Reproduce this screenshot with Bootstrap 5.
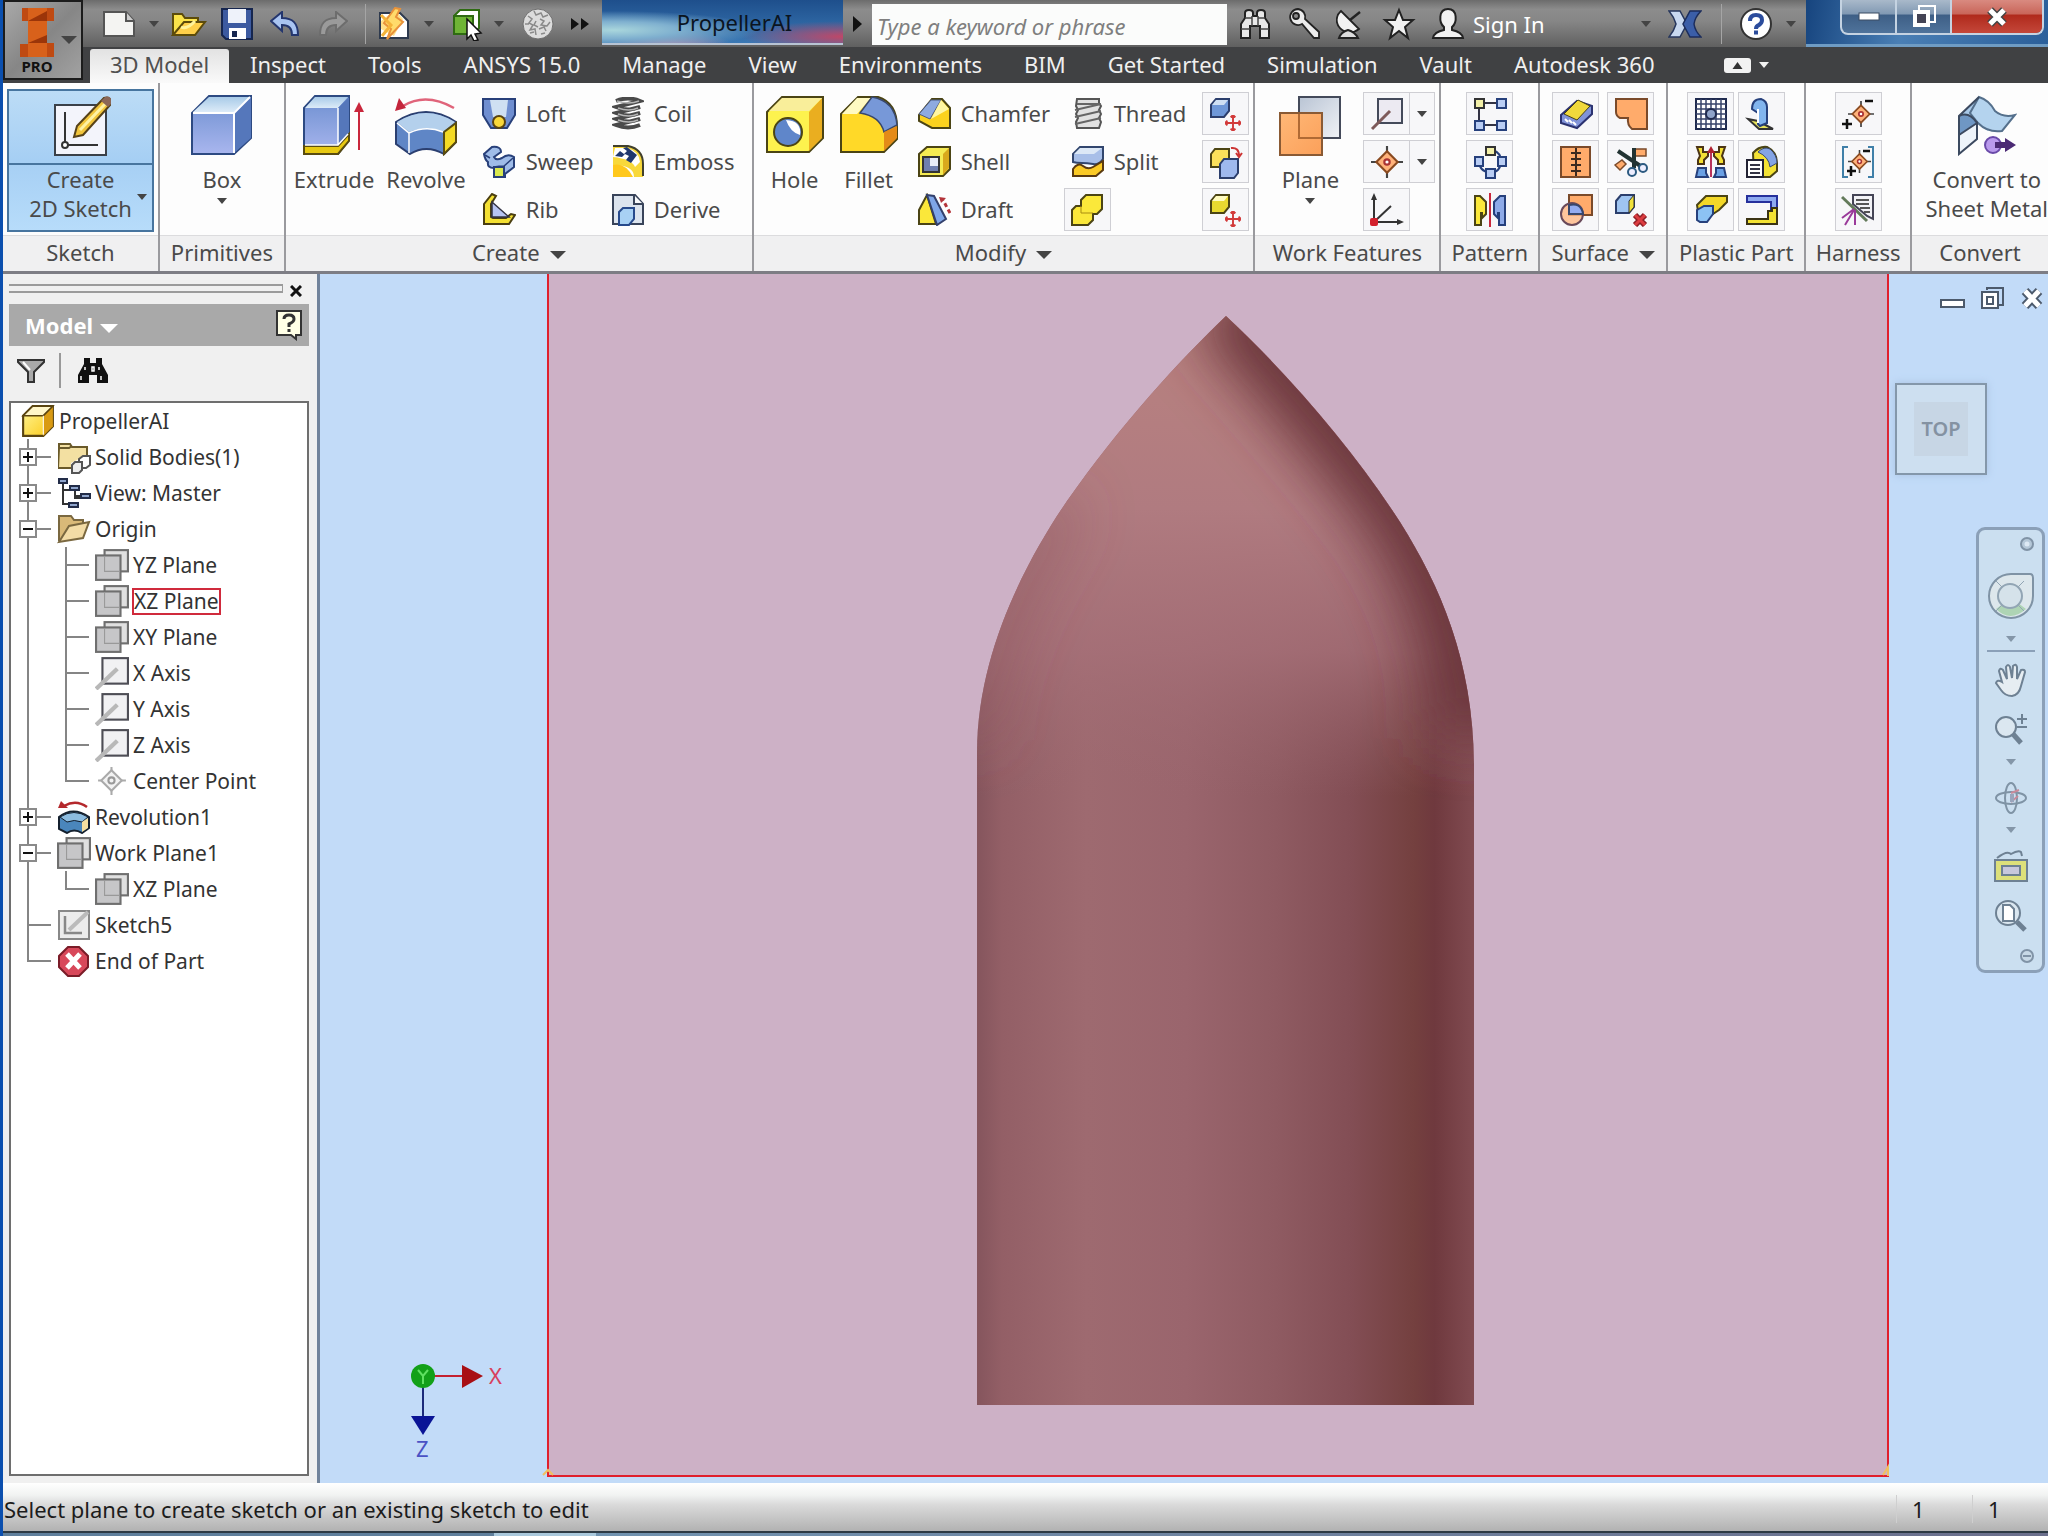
<!DOCTYPE html>
<html lang="en">
<head>
<meta charset="utf-8">
<meta name="viewport" content="width=device-width, initial-scale=1">
<title>PropellerAI</title>
<link rel="stylesheet" href="https://cdn.jsdelivr.net/npm/bootstrap@5.3.0/dist/css/bootstrap.min.css">
<style>
:root{--ui:"Noto Sans","Open Sans",sans-serif}
body{font-family:var(--ui);font-size:22px;line-height:28px;color:#4a4a4a;background:#0b4fae;min-height:100vh;overflow:hidden}
button{font:inherit;color:inherit;background:none;border:0;padding:0}
svg{display:block;flex:none}
.app-shell{min-height:100vh;padding-left:3px}
/* title bar */
.top-zone{background:#404143}
.app-btn{width:80px;height:80px;border:2px solid #1c1c1c;background:linear-gradient(135deg,#a9a9a9,#868686 50%,#a2a2a2);color:#111}
.app-btn b{font-size:15px;line-height:17px}
.title-bar{height:47px;background:linear-gradient(#6c6c6c 0,#8c8c8c 20%,#868686 45%,#606060)}
.qat-btn{width:48px;height:47px;display:flex;align-items:center;justify-content:center}
.dot-btn{width:14px;height:47px;display:flex;align-items:center;justify-content:center}
.bar-div{width:1px;height:40px;background:#a5a5a5}
.bar-div-help{margin:0 10px 0 12px}
.doc-title{width:241px;height:45px;color:#0b1420;background:radial-gradient(ellipse at 5% 70%,#a9d6dc 0,#7fb0cf 20%,transparent 45%),radial-gradient(ellipse at 100% 85%,#c04767 0,transparent 30%),radial-gradient(ellipse at 28% 110%,#c48ca8 0,transparent 26%),linear-gradient(#1e4f8c,#3a78b4);border-bottom:2px solid #b8c4d4}
.search-box{width:355px;height:41px;border:0;border-radius:0;background:#fbfcfb;font-style:italic;padding:2px 5px 0}
.search-box::placeholder{color:#7f7f7f}
.sys-zone{flex:0 0 242px;height:47px;background:linear-gradient(100deg,#16447e,#4a7fb5 40%,#2b5f9a);border-bottom:3px solid #6f9cc4}
.sys-btns{height:35px;border:2px solid #c5d3e2;border-top:0;border-radius:0 0 8px 8px;background:linear-gradient(#a9b9ca 0,#8199b3 42%,#3e5f86 46%,#4f739b);overflow:hidden}
.sys-btns button{width:55px;height:33px;display:flex;align-items:center;justify-content:center;border-right:2px solid #c5d3e2}
.sys-btns .sys-close{width:90px;border:0;background:linear-gradient(#d98a80 0,#c9665a 42%,#b02a1c 46%,#c4473a)}
/* ribbon tabs */
.rib-tabs{height:36px;padding-left:7px}
.rib-tabs .nav-link{color:#f0f0f0;padding:0 21px;line-height:30px;height:34px;border-radius:3px 3px 0 0}
.rib-tabs .nav-link.active{background:linear-gradient(#e2e2e2,#fafafa);color:#505050;width:139px;padding:0;text-align:center}
/* ribbon */
.ribbon{height:191px;background:#fdfdfd;border-bottom:3px solid #7d7d84;overflow:hidden}
.rib-panel{border-right:2px solid #9a9a9e;display:flex;flex-direction:column;min-width:0}
.rib-panel:last-child{border:0}
.rib-body{height:152px;padding-top:6px;display:flex}
.rib-name{height:36px;background:#f0f0f1;border-top:1px solid #dcdcde;text-align:center;line-height:32px;white-space:nowrap}
.rib-name button{line-height:32px}
.p-sketch{flex:155 0 0}.p-prim{flex:124 0 0}.p-create{flex:466 0 0}.p-modify{flex:500 0 0}.p-work{flex:184 0 0}.p-pattern{flex:97 0 0}.p-surface{flex:126 0 0}.p-plastic{flex:136 0 0}.p-harness{flex:104 0 0}.p-convert{flex:136 0 0}
.big-btn{display:flex;flex-direction:column;align-items:center;padding-top:5px;line-height:29px;height:144px;white-space:nowrap}
.big-btn svg{margin-bottom:9px}
.sketch-btn{width:147px;height:143px;border:2px solid #47759f;background:linear-gradient(#bcdcf6,#a6cff4 50%,#b7dcfa);padding-top:4px}
.sketch-btn .lab{border-top:2px solid #47759f;align-self:stretch;position:relative}
.sketch-btn svg{margin-bottom:6px}
.sketch-btn .car{position:absolute;right:5px;top:29px}
.row-btn{display:flex;align-items:center;height:48px;gap:10px;white-space:nowrap}
.ico-btn{width:47px;height:43px;border:1px solid #cfcfd4;background:#f7f7f9;display:flex;align-items:center;justify-content:center;margin:3px 0 2px}
.ico-drop{width:25px;border-left:0}
.stack{display:flex;flex-direction:column}
.car{display:inline-block;width:0;height:0;border:5px solid transparent;border-top:6px solid #444;border-bottom:0;vertical-align:middle}
.car-lg{border-width:8px 8px 0;margin-left:10px}
/* browser pane */
.work-zone{flex:1 1 auto;min-height:0}
.browser{width:314px;background:#f0f0f0;padding:0 8px 7px 6px;flex:none;display:flex;flex-direction:column}
.grip{height:30px;padding-top:6px}
.grip-lines{flex:1;height:9px;border:solid #9b9b9b;border-width:2px 1px 2px 0;margin-top:4px}
.grip button{width:26px;height:22px;display:flex;align-items:center;justify-content:center}
.pane-title{height:42px;background:#a9a9a9;color:#fff;font-weight:700;font-size:22px;padding:0 6px 0 16px}
.pane-title .car{border-top-color:#fff;border-width:9px 9px 0;margin-left:7px}
.pane-tools{height:55px;padding:0 8px 6px}
.pane-tools .tool-div{width:2px;height:35px;background:#999;margin:0 16px 0 14px}
.tree{flex:1;background:#fff;border:2px solid #6e6e6e;margin:0;padding:0 0 0 8px;list-style:none;font-size:21px;line-height:27px;color:#333}
.tree ul{list-style:none;margin:0;padding:0}
.trow{display:flex;align-items:center;height:36px;white-space:nowrap}
.trow svg{margin-right:4px}
.trow-root{padding-left:2px}
.gd{width:38px;height:36px;flex:none;display:flex;align-items:center;background-repeat:no-repeat;--c:linear-gradient(#858585,#858585)}
.gd-v{background-image:var(--c);background-size:2px 36px;background-position:8px 0}
.gd-t{background-image:var(--c),var(--c);background-size:2px 36px,24px 2px;background-position:8px 0,8px 17px}
.gd-l{background-image:var(--c),var(--c);background-size:2px 18px,24px 2px;background-position:8px 0,8px 17px}
.exp{width:18px;height:18px;border:2px solid #8a8a8a;background:#fff;display:flex;align-items:center;justify-content:center}
.exp svg{margin:0}
.pick{outline:2px solid #d02a3c;line-height:25px;outline-offset:-1px;padding:0 1px}
/* canvas */
.canvas{flex:1;position:relative;border-left:3px solid #71839b;background:#c2dbf8;min-width:0;overflow:hidden}
.canvas>svg{width:100%;height:100%}
.doc-ctl{position:absolute;right:3px;top:10px;gap:15px}
.cube{position:absolute;right:61px;top:109px;width:92px;height:92px;border:2px solid #8497aa;background:#cddff0;box-shadow:0 0 8px #a9c2e2;padding:17px}
.cube-in{display:flex;align-items:center;justify-content:center;width:54px;height:54px;background:#c7d6e5;color:#8492a2;font-weight:600;font-size:20px}
.nav-tools{position:absolute;right:3px;top:253px;width:69px;height:446px;border:3px solid #8ba0b8;border-radius:9px;background:#cbdff0;padding:6px 8px;color:#7f93a5;align-items:center}
.nav-tools button{display:flex;align-items:center;justify-content:center;width:48px}
.nav-tools hr{width:48px;margin:8px 0 11px;border-top:2px solid #8ba0b8;opacity:1}
.nav-tools .car{border-top-color:#8496a8}
/* status bar */
.status-bar{height:48px;background:linear-gradient(#fff 0,#f1f3f2 25%,#dadada 45%,#b2b2b2);color:#1c1c1c;padding:3px 0 0 1px}
.status-bar .cell{width:76px;border-left:1px solid #cfcfcf;padding-left:15px}
.status-bar .cell:last-child{width:88px}
.status-bar .cell:last-child{width:76px}
.task-edge{height:5px;background:linear-gradient(#2d3a44 40%,transparent 40%),linear-gradient(90deg,#5f7f9c 24%,#a9c8dc 24% 29%,#7193b0 29%,#6b6f8c)}
</style>
<script src="https://cdn.jsdelivr.net/npm/bootstrap@5.3.0/dist/js/bootstrap.bundle.min.js"></script>
</head>
<body>
<svg width="0" height="0" class="position-absolute" aria-hidden="true">
<defs>
<linearGradient id="gB" x2="0" y2="1"><stop stop-color="#6d8fd0"/><stop offset="1" stop-color="#a9b6ee"/></linearGradient>
<linearGradient id="gL" x2="0" y2="1"><stop stop-color="#a9cbe8"/><stop offset="1" stop-color="#dcebf8"/></linearGradient>
<linearGradient id="gY" x2="1" y2="1"><stop stop-color="#fff79a"/><stop offset="1" stop-color="#fbc814"/></linearGradient>
<linearGradient id="gO" x2="1" y2="1"><stop stop-color="#ffb877"/><stop offset="1" stop-color="#fba05a"/></linearGradient>
<linearGradient id="gG" x2="1" y2="1"><stop stop-color="#b9c4d4"/><stop offset="1" stop-color="#f0f2f6"/></linearGradient>
<linearGradient id="gBody" x2="1"><stop stop-color="#85555d"/><stop offset=".05" stop-color="#935f66"/><stop offset=".22" stop-color="#9e6a70"/><stop offset=".42" stop-color="#9a656d"/><stop offset=".6" stop-color="#8f5b62"/><stop offset=".75" stop-color="#834e55"/><stop offset=".88" stop-color="#74403f"/><stop offset=".92" stop-color="#6f393e"/><stop offset="1" stop-color="#814b51"/></linearGradient>
<linearGradient id="gFade" x2="0" y2="1"><stop stop-color="#b98280"/><stop offset=".4" stop-color="#b07b80"/><stop offset=".7" stop-color="#a67078" stop-opacity=".8"/><stop offset="1" stop-color="#9c686f" stop-opacity="0"/></linearGradient>
<clipPath id="hullClip"><path d="M1226 316C1180 360 1120 425 1067 501C1030 555 977 650 977 752V1405H1474V765C1473 660 1440 586 1400 522C1352 448 1290 376 1226 316Z"/></clipPath>
<filter id="soft" filterUnits="userSpaceOnUse" x="850" y="200" width="800" height="1000"><feGaussianBlur stdDeviation="28"/></filter>

<symbol id="i-plane" viewBox="0 0 32 32"><rect x="9" y="2" width="22" height="20" fill="#e0e0e0" stroke="#6f6f6f" stroke-width="2"/><rect x="1" y="7" width="23" height="23" fill="#c6c6c8" stroke="#6f6f6f" stroke-width="2"/><path d="M9 8v14h14" fill="none" stroke="#999"/></symbol>
<symbol id="i-axis" viewBox="0 0 32 32"><rect x="7" y="2" width="24" height="24" fill="#f1f1f3" stroke="#4e4e56" stroke-width="2"/><path d="M1 31 21 12" stroke="#b8b8b8" stroke-width="4"/></symbol>
<symbol id="i-move" viewBox="0 0 10 10"><path d="M5 0v10M0 5h10M3.500 1.500 5 0l1.500 1.500M3.500 8.500 5 10l1.500-1.500M1.500 3.500 0 5l1.500 1.500M8.500 3.500 10 5 8.500 6.500" fill="none" stroke="#d23a3a" stroke-width="1.200"/></symbol>
<symbol id="i-pt" viewBox="0 0 30 30"><path d="M15 0v6M15 24v6M0 15h6M24 15h6" stroke="#444" stroke-width="2"/><path d="M15 5 25 15 15 25 5 15Z" fill="#ffb27a" stroke="#8a4a20" stroke-width="2"/><circle cx="15" cy="15" r="2.500" fill="#fff" stroke="#a33" stroke-width="2"/></symbol>
<symbol id="i-bino" viewBox="0 0 32 32"><path d="M6 5q0-3 4-3t4 3v3h4V5q0-3 4-3t4 3v5l4 6v14h-9V18h-10v12H2V16l4-6Z" fill="#e8e8e8" stroke="#222" stroke-width="2"/><path d="M13 8v10M19 8v10M2 21h9M21 21h9M6 10h7M19 10h7" stroke="#444" stroke-width="1.500"/></symbol>
<symbol id="i-cube" viewBox="0 0 32 32"><path d="M2 11 11 2h19v19l-9 9H2Z" fill="url(#gY)" stroke="#5a4410" stroke-width="2"/><path d="M21 11 30 2v19l-9 9Z" fill="#d99a12"/><path d="M2 11 11 2h19l-9 9Z" fill="#fff6c8" stroke="#5a4410" stroke-width="1.500"/><path d="M21 11v18" stroke="#fff"/></symbol>
</defs>
</svg>

<div class="app-shell d-flex flex-column">
<header class="top-zone d-flex">
  <button class="app-btn d-flex align-items-center flex-shrink-0" aria-label="Application menu">
    <span class="stack align-items-center ms-2 ps-1"><svg width="40" height="52" viewBox="0 0 40 52"><path d="M5 2h32v13h-7v22h7v14H3V38h8V15H5Z" fill="#bf4a12"/><path d="M11 2h19v49H11Z" fill="#d8611b"/><path d="M11 15 30 5v10ZM11 37l19-8v8Z" fill="#9b3509"/></svg><b>PRO</b></span>
    <span class="car car-lg ms-1"></span>
  </button>
  <div class="flex-grow-1">
    <div class="title-bar d-flex">
      <div class="d-flex align-items-center ps-2">
        <button class="qat-btn ms-1" aria-label="New"><svg width="34" height="28" viewBox="0 0 34 28"><path d="M2 2h22l8 9v15H2Z" fill="#f4f4f2" stroke="#555" stroke-width="2"/><path d="M24 2v9h8" fill="#ccc" stroke="#555" stroke-width="2"/></svg></button>
        <button class="dot-btn mx-1" aria-label="New options"><span class="car"></span></button>
        <button class="qat-btn" aria-label="Open"><svg width="36" height="26" viewBox="0 0 36 26"><path d="M2 24V3h9l3 4h13v7" fill="#fbe34a" stroke="#5c4b0a" stroke-width="2"/><path d="M2 24 13 11h21L24 24Z" fill="#ffd04a" stroke="#5c4b0a" stroke-width="2"/><path d="M10 16q6 3 14-6" stroke="#fff39a" stroke-width="3" fill="none"/></svg></button>
        <button class="qat-btn" aria-label="Save"><svg width="32" height="34" viewBox="0 0 32 34"><path d="M1 2h30v30H5L1 28Z" fill="#3c5aa0" stroke="#16264f" stroke-width="2"/><rect x="7" y="2" width="18" height="14" fill="#eef2fa"/><rect x="8" y="21" width="17" height="11" fill="#fff"/><rect x="11" y="24" width="5" height="6" fill="#16264f"/></svg></button>
        <button class="qat-btn" aria-label="Undo"><svg width="30" height="26" viewBox="0 0 30 26"><path d="M1 10 12 1v6c11 0 16 5 16 17h-6c0-7-3-10-10-10v6Z" fill="#a9c4f2" stroke="#24366e" stroke-width="2"/></svg></button>
        <button class="qat-btn" aria-label="Redo"><svg width="30" height="26" viewBox="0 0 30 26"><path d="M29 10 18 1v6C7 7 2 12 2 24h6c0-7 3-10 10-10v6Z" fill="#9a9a9a" stroke="#6d6d6d" stroke-width="2"/></svg></button>
        <span class="bar-div ms-2"></span>
        <button class="qat-btn ms-1" aria-label="Home view"><svg width="34" height="34" viewBox="0 0 34 34"><path d="M3 6h20l8 8v17H3Z" fill="#fff" stroke="#2e3a4e" stroke-width="2"/><path d="M4 14 18 3l8 9-9 17L4 22Z" fill="#ffe08a"/><path d="M18 1 7 16l7 6-4 10 16-17-7-5 4-8Z" fill="#ffdb6b" stroke="#e8923a" stroke-width="2"/><path d="M4 8 14 18 5 29" fill="none" stroke="#f4b33a" stroke-width="3"/></svg></button>
        <button class="dot-btn ms-1" aria-label="Home options"><span class="car"></span></button>
        <button class="qat-btn ms-2" aria-label="Select"><svg width="34" height="34" viewBox="0 0 34 34"><path d="M3 9 9 3h19v18l-6 6H3Z" fill="#fff" stroke="#2f6b12" stroke-width="2"/><path d="M3 9h19v18H3Z" fill="#6fb536" stroke="#2f6b12" stroke-width="2"/><path d="m16 12 14 14-6 1 3 6-4 1-3-6-4 4Z" fill="#fff" stroke="#111" stroke-width="1.500"/></svg></button>
        <button class="dot-btn" aria-label="Select options"><span class="car"></span></button>
        <button class="qat-btn ms-2" aria-label="Appearance"><svg width="34" height="34" viewBox="0 0 34 34"><circle cx="17" cy="17" r="15" fill="#dcdcdc" stroke="#6f6f6f"/><path d="M7 9l4 3-3 4 4 2-3 5 5-1 1 6M13 4l2 4 5-2 2 4 5-2M19 12l4 2-3 4 6 1 3-4M18 22l5-2 2 4M15 14l-2 4 4 2M9 26l4-1M4 17h4M20 27l4-1" stroke="#8a8a8a" stroke-width="1.500" fill="none"/></svg></button>
        <button class="d-flex px-2 me-1" aria-label="More tools"><svg width="20" height="14" viewBox="0 0 20 14"><path d="m1 1 8 6-8 6ZM11 1l8 6-8 6Z" fill="#111"/></svg></button>
      </div>
      <div class="doc-title d-flex align-items-center justify-content-center ps-4">PropellerAI</div>
      <button class="d-flex align-items-center px-2" aria-label="Expand title"><svg width="13" height="18" viewBox="0 0 13 18"><path d="m2 1 9 8-9 8Z" fill="#111"/></svg></button>
      <input class="search-box mt-1" type="search" aria-label="Search" placeholder="Type a keyword or phrase">
      <div class="d-flex align-items-center text-white text-nowrap">
        <button class="qat-btn ms-1" aria-label="Find"><svg width="32" height="34"><use href="#i-bino"/></svg></button>
        <button class="qat-btn" aria-label="Licences"><svg width="34" height="34" viewBox="0 0 34 34"><path d="M12 2a8 8 0 1 0 4 15l12 14h5v-6L19 12A8 8 0 0 0 12 2Zm-2 4a3 3 0 1 1 0 6 3 3 0 0 1 0-6Z" fill="#ececec" stroke="#222" stroke-width="1.800"/></svg></button>
        <button class="qat-btn" aria-label="Subscription center"><svg width="30" height="32" viewBox="0 0 30 32"><path d="M5 3a13 12 0 0 0 18 18Z" fill="#f2f2f2" stroke="#222" stroke-width="1.800"/><path d="m14 12 10-8" stroke="#222" stroke-width="2.500"/><path d="M3 30q2-6 9-8 7 2 10 8Z" fill="#ddd" stroke="#222" stroke-width="2"/></svg></button>
        <button class="qat-btn" aria-label="Favorites"><svg width="34" height="34" viewBox="0 0 34 34"><path d="m17 3 4 10h10l-8 7 3 11-9-7-9 7 3-11-8-7h10Z" fill="#f2f2f2" stroke="#222" stroke-width="2"/></svg></button>
        <button class="d-flex align-items-center ms-2 gap-2"><svg width="34" height="34" viewBox="0 0 34 34"><path d="M17 2c10 0 9 14 4 18v3q10 2 11 8H2q1-6 11-8v-3C8 16 7 2 17 2Z" fill="#f2f2f2" stroke="#222" stroke-width="2"/></svg>Sign In</button>
      </div>
      <div class="d-flex align-items-center ms-auto">
        <button class="dot-btn" aria-label="Account options"><span class="car"></span></button>
        <button class="qat-btn ms-2" aria-label="Exchange apps"><svg width="34" height="30" viewBox="0 0 34 30"><path d="M1 2h11l7 13-7 13H1q5-6 7-13-2-7-7-13Z" fill="#c8d8ef" stroke="#26365c" stroke-width="1.500"/><path d="M33 2H22l-7 13 7 13h11q-6-6-7-13 1-7 7-13Z" fill="#3b5ea8" stroke="#1c2d5c" stroke-width="1.500"/></svg></button>
        <span class="bar-div bar-div-help"></span>
        <button class="qat-btn" aria-label="Help"><svg width="34" height="34" viewBox="0 0 34 34"><circle cx="17" cy="17" r="15" fill="#fff" stroke="#333" stroke-width="2"/><path d="M11 14q0-6 6-6t6 5q0 3-3 5-3 1-3 4" fill="none" stroke="#2b4c9c" stroke-width="4"/><rect x="15" y="23.500" width="4" height="4" fill="#2b4c9c"/></svg></button>
        <button class="dot-btn ms-1 me-2" aria-label="Help options"><span class="car"></span></button>
      </div>
      <div class="sys-zone d-flex justify-content-end pe-1">
        <div class="sys-btns d-flex align-self-start">
          <button aria-label="Minimize"><svg width="22" height="9"><rect x="1" y="1" width="20" height="7" fill="#fff" stroke="#3c4d63"/></svg></button>
          <button aria-label="Restore"><svg width="24" height="24" viewBox="0 0 24 24"><path d="M7 5V1h16v16h-5" fill="none" stroke="#fff" stroke-width="2"/><rect x="3" y="7" width="13" height="13" fill="#445" stroke="#fff" stroke-width="4"/></svg></button>
          <button class="sys-close" aria-label="Close"><svg width="22" height="20" viewBox="0 0 22 20"><path d="m4 3 14 14M18 3 4 17" stroke="#444" stroke-width="8"/><path d="m4 3 14 14M18 3 4 17" stroke="#fff" stroke-width="5"/></svg></button>
        </div>
      </div>
    </div>
    <nav class="nav rib-tabs flex-nowrap align-items-end text-nowrap" aria-label="Ribbon">
      <a class="nav-link active" href="#">3D Model</a><a class="nav-link" href="#">Inspect</a><a class="nav-link" href="#">Tools</a><a class="nav-link" href="#">ANSYS 15.0</a><a class="nav-link" href="#">Manage</a><a class="nav-link" href="#">View</a><a class="nav-link" href="#">Environments</a><a class="nav-link" href="#">BIM</a><a class="nav-link" href="#">Get Started</a><a class="nav-link" href="#">Simulation</a><a class="nav-link" href="#">Vault</a><a class="nav-link" href="#">Autodesk 360</a>
      <button class="align-self-center d-flex align-items-center ms-5 gap-2" aria-label="Minimize ribbon"><svg width="27" height="15" viewBox="0 0 27 15"><rect width="27" height="15" rx="3" fill="#f2f2f2"/><path d="m13.500 4 5 7h-10Z" fill="#333"/></svg><span class="car border-bottom-0" style="border-top-color:#f2f2f2"></span></button>
    </nav>
  </div>
</header>

<section class="ribbon d-flex" aria-label="3D Model ribbon">
  <div class="rib-panel p-sketch"><div class="rib-body ps-1">
    <button class="big-btn sketch-btn"><svg width="60" height="62" viewBox="0 0 60 62"><rect x="4" y="10" width="51" height="50" fill="#f3f4fb" stroke="#3a4048" stroke-width="2"/><path d="M14 17v33h33" fill="none" stroke="#333" stroke-width="2"/><circle cx="14" cy="50" r="3" fill="#fff" stroke="#333" stroke-width="2"/><path d="m23 42 3-11L53 3q7-2 7 6L32 40Z" fill="#f2c53c" stroke="#574218" stroke-width="2"/><path d="m29 35 27-28" stroke="#fff2a4" stroke-width="3"/><path d="m50 6 4-4q7-2 7 6l-4 4Z" fill="#8b6757"/></svg><span class="lab">Create<br>2D Sketch<i class="car"></i></span></button>
  </div><div class="rib-name">Sketch</div></div>

  <div class="rib-panel p-prim"><div class="rib-body justify-content-center">
    <button class="big-btn"><svg width="62" height="62" viewBox="0 0 62 62"><path d="M1 19 18 2h42v42L43 60H1Z" fill="url(#gB)" stroke="#2d4a82" stroke-width="2"/><path d="M2 18 18 3h41L43 18Z" fill="url(#gL)"/><path d="M43 19 60 3v41L43 59Z" fill="#5577bb"/><path d="M2 19h41v40M43 19 59 3" fill="none" stroke="#fff" stroke-width="2"/></svg>Box<i class="car mt-1"></i></button>
  </div><div class="rib-name">Primitives</div></div>

  <div class="rib-panel p-create"><div class="rib-body ps-2">
    <button class="big-btn me-2 pe-1"><svg width="62" height="62" viewBox="0 0 62 62"><path d="M1 14 12 2h34v44L35 60H1Z" fill="url(#gB)" stroke="#2d4a82" stroke-width="2"/><path d="M2 14 12 3h33L35 14Z" fill="url(#gL)"/><path d="M35 14 46 3v40L35 54Z" fill="#5577bb"/><path d="M1 52h34l11-12v7L35 60H1Z" fill="#e8c912" stroke="#5a4c10" stroke-width="2"/><path d="M2 51h33l10-11M35 14v37" fill="none" stroke="#fff" stroke-width="1.500"/><path d="M56 56V14" stroke="#c9273c" stroke-width="2"/><path d="m56 8 5 10H51Z" fill="#c9273c"/></svg>Extrude</button>
    <button class="big-btn me-3"><svg width="64" height="62" viewBox="0 0 64 62"><path d="M2 28Q32 8 62 28v20L50 60q-18-10-34 0L2 50Z" fill="#5f86c6" stroke="#2b3f70" stroke-width="2"/><path d="M3 28Q32 10 61 28L49 38q-18-7-34 0Z" fill="#b4d0ec"/><path d="M50 38 62 29v19L50 60Z" fill="#f4da24" stroke="#5a4c10" stroke-width="2"/><path d="M15 39v20M3 29l12 10q17-8 34-1" fill="none" stroke="#fff" stroke-width="1.500"/><path d="M9 12Q32-2 60 14" fill="none" stroke="#e0647a" stroke-width="2.500"/><path d="m1 17 4-13 7 10Z" fill="#c4263c"/></svg>Revolve</button>
    <div class="stack" style="width:130px">
      <button class="row-btn"><svg width="34" height="33" viewBox="0 0 34 33"><path d="M1 2h32v16l-8 13H9L1 18Z" fill="#6f8ed0" stroke="#28407a" stroke-width="2"/><path d="M8 3h18l-2 17H11Z" fill="#cfe0f2"/><circle cx="17" cy="25" r="6" fill="#f9d83a" stroke="#5a4410" stroke-width="2"/></svg>Loft</button>
      <button class="row-btn"><svg width="34" height="33" viewBox="0 0 34 33"><path d="m2 9 8-7q9-1 9 5l-7 5q2 4 8 1 6-5 12-1v10l-9 7v3H12v-9q-7 0-6-6-3-2-4-8Z" fill="#9fbce8" stroke="#28407a" stroke-width="2"/><path d="m3 10 5 3M12 22q5-1 10-1l9-8" fill="none" stroke="#28407a" stroke-width="1.500"/><rect x="12" y="22" width="10" height="10" fill="#d9e94e" stroke="#28407a" stroke-width="2"/></svg>Sweep</button>
      <button class="row-btn"><svg width="34" height="33" viewBox="0 0 34 33"><path d="M2 31V11l8-10 4 2-5 8v13l2 1h13l5-4 4 1-6 9Z" fill="#f4e032" stroke="#4a3e10" stroke-width="2"/><path d="m10 9 17 15H10Z" fill="#b7c4f2" stroke="#334" stroke-width="1.500"/></svg>Rib</button>
    </div>
    <div class="stack">
      <button class="row-btn"><svg width="32" height="33" viewBox="0 0 32 33"><path d="M4 4q12-5 24 0L4 10q12 5 24 0L4 16q12 5 24 0L4 22q12 5 24 0L4 28q12 5 24 0" fill="none" stroke="#4a4a4a" stroke-width="4"/><path d="M5 4q12 4 22 0M6 11q11 4 20 0M6 17q11 4 20 0M6 23q11 4 20 0" stroke="#b5b5b5" stroke-width="1.500" fill="none"/></svg>Coil</button>
      <button class="row-btn"><svg width="32" height="33" viewBox="0 0 32 33"><path d="M1 2h16q14 3 14 17v13h-9q0-12-21-12Z" fill="#f8d83a" stroke="none"/><path d="M1 1h15q15 3 15 18v12" fill="none" stroke="#41402c" stroke-width="2"/><path d="M3 3h12q12 3 13 14l-5 5Q20 14 1 12Z" fill="#fff"/><path d="m3 11 5-5 4 3 3-3-4-3 4-1 10 8-6 8-5-3 3-4-4-2-3 3Z" fill="#20386e"/><path d="M1 20q12-3 20 12H1Z" fill="#ffc81c"/></svg>Emboss</button>
      <button class="row-btn"><svg width="32" height="33" viewBox="0 0 32 33"><path d="M1 31V2h22l8 9v20Z" fill="#dce4ee" stroke="#39445a" stroke-width="2"/><path d="M22 2v9h9" fill="#f8fafc" stroke="#39445a" stroke-width="2"/><path d="m7 19 4-4h11v11l-5 6H7Z" fill="#a8d1f4" stroke="#274a8c" stroke-width="2"/></svg>Derive</button>
    </div>
  </div><div class="rib-name"><button>Create<i class="car car-lg"></i></button></div></div>

  <div class="rib-panel p-modify"><div class="rib-body ps-1">
    <div class="d-flex gap-2">
    <button class="big-btn ms-1" style="width:66px"><svg width="58" height="62" viewBox="0 0 58 62"><path d="M1 18 16 3h41v41L43 58H1Z" fill="#fdf24e" stroke="#4b4414" stroke-width="2"/><path d="M43 18 56 4v40L43 57Z" fill="#eaae20"/><path d="M3 17 16 4h40L43 17Z" fill="#f9ee9a"/><circle cx="22" cy="38" r="14" fill="#5f86ca" stroke="#4b4414" stroke-width="2"/><path d="M20 26q4 12 14 15 2-14-14-15Z" fill="#fff"/></svg>Hole</button>
    <button class="big-btn" style="width:66px"><svg width="58" height="62" viewBox="0 0 58 62"><path d="M1 20 18 3h20q19 6 19 30v12L44 58H1Z" fill="#ffd928" stroke="#4b4414" stroke-width="2"/><path d="M2 20 17 4h14L17 20Z" fill="#fffac2"/><path d="M32 3q23 4 25 28L44 38Q40 22 20 19Z" fill="#7798d8" stroke="#38476c" stroke-width="1.500"/><path d="M44 38 57 32v12L44 57Z" fill="#e48b18"/></svg>Fillet</button>
    </div>
    <div class="stack ms-3" style="width:154px">
      <button class="row-btn"><svg width="33" height="33" viewBox="0 0 33 33"><path d="M1 18 14 2h10l8 9v20H14L1 24Z" fill="#fbd21e" stroke="#4b4414" stroke-width="2"/><path d="M1 17 13 3h10L12 22Z" fill="#8eaae0" stroke="#4b5a80"/><path d="M13 22 23 3l8 9Z" fill="#fff6a2"/></svg>Chamfer</button>
      <button class="row-btn"><svg width="33" height="33" viewBox="0 0 33 33"><path d="M1 9 9 2h23v22l-7 7H1Z" fill="#f5eb52" stroke="#4b4414" stroke-width="2"/><path d="M25 9 31 3v20l-6 7Z" fill="#d9a91c"/><rect x="5" y="12" width="16" height="15" fill="#6f7fae" stroke="#333" stroke-width="2"/><path d="M12 13v8h8v-8Z" fill="#e8ecf6"/></svg>Shell</button>
      <button class="row-btn"><svg width="33" height="33" viewBox="0 0 33 33"><path d="M1 31V17L9 2l9 29Z" fill="#fbe73a" stroke="#4b4414" stroke-width="2"/><path d="m9 2 7 1 12 23-9 6Z" fill="#7fa6e8" stroke="#33406c" stroke-width="2"/><path d="m32 20-7-13" stroke="#b3343a" stroke-width="3" stroke-dasharray="4 3"/><path d="m21 4 7 1-5 5Z" fill="#b3343a"/></svg>Draft</button>
    </div>
    <div class="stack" style="width:128px">
      <button class="row-btn"><svg width="32" height="33" viewBox="0 0 32 33"><path d="M5 2h22v4l2 3-2 4 2 4-2 4 2 4-2 6H5l-1-6 2-4-2-4 2-4-2-4Z" fill="#e1e1e1" stroke="#555" stroke-width="2"/><path d="M3 13 29 7M3 20l26-6M3 27l26-6M5 7h22" stroke="#666" stroke-width="2"/></svg>Thread</button>
      <button class="row-btn"><svg width="32" height="33" viewBox="0 0 32 33"><path d="M1 9 8 2h23v12q-4 6-10 5t-11-1q-6 0-9-1Z" fill="#a8bfe8" stroke="#32466e" stroke-width="2"/><path d="M2 9 8 3h22l-8 6Z" fill="#dce8f6"/><path d="M1 24q5-7 10-3t10 1l10-6v9l-7 6H1Z" fill="#fbca26" stroke="#5a3a10" stroke-width="2"/></svg>Split</button>
      <button class="ico-btn" aria-label="Combine" style="margin-left:-8px"><svg width="34" height="34" viewBox="0 0 34 34"><path d="M2 17 6 13h5V7l5-5h16v14l-5 5h-4v6l-5 5H2Z" fill="#fbe83a" stroke="#4b4414" stroke-width="2"/><path d="M11 13v7h12" fill="none" stroke="#a98c10"/></svg></button>
    </div>
    <div class="stack ms-auto me-1">
      <button class="ico-btn" aria-label="Move face"><svg width="34" height="34" viewBox="0 0 34 34"><path d="m2 8 5-6h13v12l-5 6H2Z" fill="#6f98d8" stroke="#2b3e6c" stroke-width="2"/><path d="m3 8 4-5h12l-4 5Z" fill="#cfe0f4"/><use href="#i-move" x="16" y="18" width="16" height="16"/></svg></button>
      <button class="ico-btn" aria-label="Copy object"><svg width="34" height="34" viewBox="0 0 34 34"><path d="m2 9 4-5h14v14l-5 4H2Z" fill="#fbe05a" stroke="#4b4414" stroke-width="2"/><path d="m11 19 4-5h14v14l-4 5H11Z" fill="#9fb9ee" stroke="#2b3e6c" stroke-width="2"/><path d="M22 3q8-1 8 8m-3-3 3 4 3-4" fill="none" stroke="#c33" stroke-width="2"/></svg></button>
      <button class="ico-btn" aria-label="Move bodies"><svg width="34" height="34" viewBox="0 0 34 34"><path d="m2 8 5-6h13v12l-5 6H2Z" fill="#e9d930" stroke="#4b4414" stroke-width="2"/><path d="m3 8 4-5h12l-4 5Z" fill="#fffbc0"/><use href="#i-move" x="16" y="18" width="16" height="16"/></svg></button>
    </div>
  </div><div class="rib-name"><button>Modify<i class="car car-lg"></i></button></div></div>

  <div class="rib-panel p-work"><div class="rib-body justify-content-between ps-4 pe-1">
    <button class="big-btn"><svg width="62" height="62" viewBox="0 0 62 62"><rect x="20" y="3" width="41" height="41" fill="url(#gG)" stroke="#444a5a" stroke-width="2"/><rect x="1" y="19" width="42" height="42" fill="url(#gO)" stroke="#8a5a34" stroke-width="2"/><path d="M20 20v24h22" fill="none" stroke="#b06a34" stroke-width="2"/></svg>Plane<i class="car mt-1"></i></button>
    <div class="stack">
      <div class="d-flex"><button class="ico-btn" aria-label="Axis"><svg width="34" height="34" viewBox="0 0 34 34"><rect x="8" y="2" width="24" height="24" fill="#eceaf2" stroke="#444a5a" stroke-width="2"/><path d="m2 32 18-18" stroke="#7d5a5a" stroke-width="3"/></svg></button><button class="ico-btn ico-drop" aria-label="Axis options"><i class="car"></i></button></div>
      <div class="d-flex"><button class="ico-btn" aria-label="Point"><svg width="32" height="32"><use href="#i-pt"/></svg></button><button class="ico-btn ico-drop" aria-label="Point options"><i class="car"></i></button></div>
      <button class="ico-btn" aria-label="UCS"><svg width="34" height="34" viewBox="0 0 34 34"><path d="M4 29V4M4 29h26M5 28 21 13" stroke="#333" stroke-width="2"/><path d="m4 0 3 7H1ZM34 29l-7 3v-6Z" fill="#333"/><rect y="25" width="8" height="8" rx="2" fill="#d3202c"/></svg></button>
    </div>
  </div><div class="rib-name">Work Features</div></div>

  <div class="rib-panel p-pattern"><div class="rib-body justify-content-center"><div class="stack">
      <button class="ico-btn" aria-label="Rectangular"><svg width="34" height="34" viewBox="0 0 34 34"><path d="M6 6h22M6 6v22h22" fill="none" stroke="#334" stroke-width="2"/><g fill="#b9cdf4" stroke="#26407c" stroke-width="2"><rect x="24" y="2" width="9" height="9"/><rect x="2" y="24" width="9" height="9"/><rect x="24" y="24" width="9" height="9"/><rect x="2" y="2" width="9" height="9" fill="#f3f0a8" stroke="#333"/></g></svg></button>
      <button class="ico-btn" aria-label="Circular"><svg width="34" height="34" viewBox="0 0 34 34"><path d="M20 5q8 3 8 11 0 11-11 12-11-2-11-12" fill="none" stroke="#26407c" stroke-width="2"/><g fill="#b9cdf4" stroke="#26407c" stroke-width="2"><rect x="2" y="12" width="8" height="9"/><rect x="25" y="12" width="8" height="9"/><rect x="13" y="24" width="9" height="9"/><rect x="13" y="2" width="9" height="8" fill="#f3f0a8" stroke="#333"/></g></svg></button>
      <button class="ico-btn" aria-label="Mirror"><svg width="34" height="34" viewBox="0 0 34 34"><path d="M2 3h5l6 6v12l-4 4v-5H8v12H2Z" fill="#fbe83a" stroke="#4b4414" stroke-width="2"/><path d="M32 3h-5l-6 6v12l4 4v-5h1v12h6Z" fill="#8eaae8" stroke="#26407c" stroke-width="2"/><path d="M17 0v34" stroke="#c9273c" stroke-width="2"/></svg></button>
  </div></div><div class="rib-name">Pattern</div></div>

  <div class="rib-panel p-surface"><div class="rib-body justify-content-center gap-2"><div class="stack">
      <button class="ico-btn" aria-label="Thicken"><svg width="34" height="34" viewBox="0 0 34 34"><path d="m2 18 16-14 15 5v8L18 31 2 26Z" fill="#8193d8" stroke="#2b3270" stroke-width="2"/><path d="m5 17 14-14 12 6-13 14Z" fill="#f1d93c" stroke="#4b4414"/><path d="m6 22 3 3m1-2 3 3m1-1 3 3" stroke="#fff" stroke-width="2"/></svg></button>
      <button class="ico-btn" aria-label="Stitch"><svg width="34" height="34" viewBox="0 0 34 34"><rect x="2" y="2" width="29" height="30" fill="#ffab6b" stroke="#7a4a2a" stroke-width="2"/><path d="M17 3v28M12 8h10M12 14h10M12 20h10M12 26h10" stroke="#3c2a20" stroke-width="2"/></svg></button>
      <button class="ico-btn" aria-label="Sculpt"><svg width="34" height="34" viewBox="0 0 34 34"><rect x="10" y="2" width="23" height="20" fill="#ffab6b" stroke="#7a4a2a" stroke-width="2"/><circle cx="13" cy="21" r="11" fill="#ffb884" fill-opacity=".8" stroke="#6a4a5a" stroke-width="2"/><path d="M10 12q12-3 14 9H10Z" fill="#94acf0" stroke="#38476c" stroke-width="2"/></svg></button>
    </div><div class="stack">
      <button class="ico-btn" aria-label="Patch"><svg width="34" height="34" viewBox="0 0 34 34"><path d="M2 2h31v30H18q-5-4-4-11H6q-4-2-4-6Z" fill="#ffab6b" stroke="#7a4a2a" stroke-width="2"/></svg></button>
      <button class="ico-btn" aria-label="Trim"><svg width="34" height="34" viewBox="0 0 34 34"><path d="M20 4h12v7H20ZM1 20l7-5 4 4-6 6Z" fill="#ffab6b" stroke="#7a4a2a" stroke-width="1.500"/><path d="m4 6 24 16M20 3v20" stroke="#233" stroke-width="4"/><circle cx="18" cy="27" r="4" fill="#eef" stroke="#2c5a80" stroke-width="2"/><circle cx="29" cy="23" r="4" fill="#eef" stroke="#2c5a80" stroke-width="2"/></svg></button>
      <button class="ico-btn" aria-label="Delete face"><svg width="34" height="34" viewBox="0 0 34 34"><path d="m2 8 5-6h13v12l-5 6H2Z" fill="#9fc4f0" stroke="#2b3e6c" stroke-width="2"/><path d="m15 8 5-6v12l-5 6Z" fill="#f1e23c" stroke="#333"/><path d="m21 22 10 10M31 22 21 32" stroke="#8c1f26" stroke-width="6"/><path d="m21 22 10 10M31 22 21 32" stroke="#dc3c40" stroke-width="3"/></svg></button>
  </div></div><div class="rib-name"><button>Surface<i class="car car-lg"></i></button></div></div>

  <div class="rib-panel p-plastic"><div class="rib-body justify-content-center gap-1"><div class="stack">
      <button class="ico-btn" aria-label="Grill"><svg width="34" height="34" viewBox="0 0 34 34"><rect x="2" y="2" width="30" height="30" fill="#fff" stroke="#1f2a4e" stroke-width="2"/><path d="M7 2v30M12 2v30M17 2v30M22 2v30M27 2v30M2 7h30M2 12h30M2 17h30M2 22h30M2 27h30" stroke="#37436a" stroke-width="1.500"/><circle cx="17" cy="17" r="5" fill="#8fa3c8" stroke="#1f2a4e" stroke-width="2"/></svg></button>
      <button class="ico-btn" aria-label="Boss"><svg width="34" height="34" viewBox="0 0 34 34"><path d="M3 2h6v5h5v4l-4 4v4H4v-4l2-4ZM31 2h-6v5h-5v4l4 4v4h6v-4l-2-4Z" fill="#f3de34" stroke="#4b3414" stroke-width="2"/><path d="M4 23h8v5l2 4H2ZM30 23h-8v5l-2 4h12Z" fill="#6aa0e4" stroke="#26407c" stroke-width="2"/><path d="M17 32V6" stroke="#b8335c" stroke-width="2"/><path d="m17 1 4 7h-8Z" fill="#b02030"/></svg></button>
      <button class="ico-btn" aria-label="Lip"><svg width="34" height="34" viewBox="0 0 34 34"><path d="m3 12 9-9h21v6l-8 8-6 4v-8h-8v5H4Z" fill="#f3d828" stroke="#4b4414" stroke-width="2"/><path d="m3 17 7-4h9v8l-6 8H6l-3-2Z" fill="#8cc2f4" stroke="#26407c" stroke-width="2"/></svg></button>
    </div><div class="stack">
      <button class="ico-btn" aria-label="Rest"><svg width="34" height="34" viewBox="0 0 34 34"><path d="m3 22 10 2 15 8H14Z" fill="#e8e45c" stroke="#333" stroke-width="2"/><path d="M7 12q0-10 9-10 6 2 6 8v16l-7 3-2-2V16Z" fill="#82b5ee" stroke="#26407c" stroke-width="2"/><path d="M13 12v14" stroke="#fff" stroke-width="2"/></svg></button>
      <button class="ico-btn" aria-label="Rule fillet"><svg width="34" height="34" viewBox="0 0 34 34"><path d="M8 8q6-7 14-6 10 5 10 16v8l-7 6H9Z" fill="#f3e234" stroke="#4b4414" stroke-width="2"/><path d="M13 7q6-6 12-3 7 6 7 14l-7 4q-1-10-12-15Z" fill="#84a4e4" stroke="#38476c"/><rect x="2" y="15" width="16" height="17" fill="#fff" stroke="#223" stroke-width="2"/><path d="M5 20h10M5 24h10M5 28h10" stroke="#334" stroke-width="2"/></svg></button>
      <button class="ico-btn" aria-label="Snap fit"><svg width="34" height="34" viewBox="0 0 34 34"><path d="M2 3h30v13h-6V9H2Z" fill="#8eaaf0" stroke="#26309c" stroke-width="2"/><path d="M2 31v-5h21v-8h4v-3h5v16Z" fill="#f3e234" stroke="#3b3414" stroke-width="2"/></svg></button>
  </div></div><div class="rib-name">Plastic Part</div></div>

  <div class="rib-panel p-harness"><div class="rib-body justify-content-center"><div class="stack">
      <button class="ico-btn" aria-label="Place harness point"><svg width="34" height="34" viewBox="0 0 34 34"><use href="#i-pt" x="7" y="4" width="26" height="26"/><path d="M24 4h8M1 27h10M6 22v10" stroke="#111" stroke-width="2.500"/></svg></button>
      <button class="ico-btn" aria-label="Place pin group"><svg width="34" height="34" viewBox="0 0 34 34"><use href="#i-pt" x="7" y="5" width="23" height="23"/><path d="M22 6h7M6 26h9M10 21v10" stroke="#111" stroke-width="2.500"/><path d="M7 2H2v30h5M27 2h5v30h-5" fill="none" stroke="#3f7fa8" stroke-width="2"/></svg></button>
      <button class="ico-btn" aria-label="Harness properties"><svg width="34" height="34" viewBox="0 0 34 34"><path d="M12 2h20v24l-6-3-14-12Z" fill="#f2f2f6" stroke="#445" stroke-width="2"/><path d="M15 7h13M15 11h13M19 15h10M23 19h6" stroke="#555" stroke-width="2"/><path d="m1 4 25 24" stroke="#637a5a" stroke-width="3"/><path d="m13 17-9 15M14 17v15M1 25l12-9" stroke="#9a3a9a" stroke-width="2"/></svg></button>
  </div></div><div class="rib-name">Harness</div></div>

  <div class="rib-panel p-convert"><div class="rib-body justify-content-end">
    <button class="big-btn"><svg width="60" height="62" viewBox="0 0 60 62"><path d="M1 24 22 3l21 20-12 14-10-7-6 2-14-8Z" fill="#a9c9e8"/><path d="M22 3q10 3 16 14 8 7 20 4L45 37q-14 2-24-8L13 19Z" fill="#b4d3ee" stroke="#55708c" stroke-width="2"/><path d="M2 22Q12 17 20 29L2 41Z" fill="#6f97c4"/><path d="M2 41 20 29v15L2 60Z" fill="#eef4fa"/><path d="M22 3 2 22v38l18-15V29L2 41M2 22Q12 17 20 29" fill="none" stroke="#3c4a60" stroke-width="2"/><circle cx="36" cy="51" r="8" fill="#b99aec" stroke="#6a4aa8" stroke-width="2"/><path d="M38 48h10v-4l11 7-11 7v-4H38Z" fill="#4b2a74"/></svg>Convert to<br>Sheet Metal</button>
  </div><div class="rib-name">Convert</div></div>
</section>

<main class="work-zone d-flex">
  <aside class="browser">
    <div class="grip d-flex"><div class="grip-lines"></div><button aria-label="Close browser"><svg width="12" height="12" viewBox="0 0 12 12"><path d="m1 1 10 10M11 1 1 11" stroke="#111" stroke-width="3"/></svg></button></div>
    <div class="pane-title d-flex align-items-center"><button class="fw-bold">Model<i class="car"></i></button><button class="ms-auto" aria-label="Help"><svg width="28" height="32" viewBox="0 0 28 32"><path d="M2 2h24v24h-5v4l-5-4H2Z" fill="#ffffe6" stroke="#333" stroke-width="2"/><path d="M9 10q0-4 5-4t5 4q0 3-5 5v3" fill="none" stroke="#333" stroke-width="3"/><rect x="12.500" y="20" width="3" height="3" fill="#333"/></svg></button></div>
    <div class="pane-tools d-flex align-items-center"><button aria-label="Filter"><svg width="28" height="25" viewBox="0 0 28 25"><path d="M1 2h26v2L17 14v10h-6V14L1 4Z" fill="#a9a9a9" stroke="#333" stroke-width="2"/><path d="m6 4 7 8" stroke="#fff" stroke-width="2"/></svg></button><span class="tool-div"></span><button aria-label="Find"><svg width="32" height="27" viewBox="0 0 32 27"><path d="M7 1h6v5h6V1h6v6l6 11v8H20v-8h-8v8H1v-8L7 7Z" fill="#111"/><path d="M8 10v3M22 10v3M4 19v4M24 19v4M15 10h2v4h-2Z" stroke="#fff" stroke-width="1.500"/></svg></button></div>
    <ul class="tree">
      <li><div class="trow trow-root"><svg width="34" height="34"><use href="#i-cube"/></svg>PropellerAI</div>
      <ul>
        <li><div class="trow"><span class="gd gd-t"><button class="exp" aria-label="Expand Solid Bodies"><svg width="12" height="12"><path d="M1 6h10M6 1v10" stroke="#111" stroke-width="2"/></svg></button></span><svg width="34" height="34" viewBox="0 0 34 34"><path d="M2 29V4h11l2 3h15v8" fill="#f3e0a2" stroke="#6a5a2a" stroke-width="2"/><path d="M2 28h12V12h15V8H3Z" fill="#f3e0a2"/><path d="M2 28h13M2 8h10l3-2" stroke="#6a5a2a" stroke-width="2" fill="none"/><path d="m22 19 4-3h7v9l-4 3h-7Z" fill="#fff" stroke="#555" stroke-width="2"/><path d="m15 25 3-3h7v8l-3 3h-7Z" fill="#eee" stroke="#555" stroke-width="2"/></svg>Solid Bodies(1)</div></li>
        <li><div class="trow"><span class="gd gd-t"><button class="exp" aria-label="Expand View"><svg width="12" height="12"><path d="M1 6h10M6 1v10" stroke="#111" stroke-width="2"/></svg></button></span><svg width="34" height="34" viewBox="0 0 34 34"><path d="M6 7v21h6M6 14h6M18 12v10h6M18 20h5" fill="none" stroke="#333" stroke-width="2"/><g fill="#8fa5cc" stroke="#222c48" stroke-width="2"><rect x="2" y="3" width="8" height="4"/><rect x="13" y="10" width="9" height="4"/><rect x="24" y="18" width="9" height="4"/><rect x="12" y="27" width="9" height="4"/></g></svg>View: Master</div></li>
        <li><div class="trow"><span class="gd gd-t"><button class="exp" aria-label="Collapse Origin"><svg width="12" height="12"><path d="M1 6h10" stroke="#111" stroke-width="2"/></svg></button></span><svg width="34" height="34" viewBox="0 0 34 34"><path d="M2 29V4h12l3 4h9v4" fill="#d9b978" stroke="#7a6840" stroke-width="2"/><path d="m2 30 10-16 20-4-6 16Z" fill="#f3dca6" stroke="#7a6840" stroke-width="2"/></svg>Origin</div>
        <ul>
          <li><div class="trow"><span class="gd gd-v"></span><span class="gd gd-t"></span><svg width="34" height="34"><use href="#i-plane"/></svg>YZ Plane</div></li>
          <li><div class="trow"><span class="gd gd-v"></span><span class="gd gd-t"></span><svg width="34" height="34"><use href="#i-plane"/></svg><span class="pick">XZ Plane</span></div></li>
          <li><div class="trow"><span class="gd gd-v"></span><span class="gd gd-t"></span><svg width="34" height="34"><use href="#i-plane"/></svg>XY Plane</div></li>
          <li><div class="trow"><span class="gd gd-v"></span><span class="gd gd-t"></span><svg width="34" height="34"><use href="#i-axis"/></svg>X Axis</div></li>
          <li><div class="trow"><span class="gd gd-v"></span><span class="gd gd-t"></span><svg width="34" height="34"><use href="#i-axis"/></svg>Y Axis</div></li>
          <li><div class="trow"><span class="gd gd-v"></span><span class="gd gd-t"></span><svg width="34" height="34"><use href="#i-axis"/></svg>Z Axis</div></li>
          <li><div class="trow"><span class="gd gd-v"></span><span class="gd gd-l"></span><svg width="34" height="34" viewBox="0 0 33 33"><path d="M16 3v27M3 16h27" stroke="#aaa" stroke-width="2"/><path d="m16 6 10 10-10 10L6 16Z" fill="#f2f2f2" stroke="#aaa" stroke-width="2"/><circle cx="16" cy="16" r="3" fill="none" stroke="#999" stroke-width="2"/></svg>Center Point</div></li>
        </ul></li>
        <li><div class="trow"><span class="gd gd-t"><button class="exp" aria-label="Expand Revolution1"><svg width="12" height="12"><path d="M1 6h10M6 1v10" stroke="#111" stroke-width="2"/></svg></button></span><svg width="34" height="34" viewBox="0 0 34 34"><path d="M2 17q14-11 30 0v11l-7 5q-8-5-15 0l-8-4Z" fill="#4a86bc" stroke="#14202e" stroke-width="2"/><path d="M3 17q14-9 28 0l-6 5q-8-3-15 0Z" fill="#8cbce0" stroke="#14202e"/><path d="m25 22 6-4v10l-6 4Z" fill="#f5dfa0"/><path d="M7 6q12-7 23 1" fill="none" stroke="#b4282c" stroke-width="2.500"/><path d="M1 8 4 1l7 7Z" fill="#b4282c"/></svg>Revolution1</div></li>
        <li><div class="trow"><span class="gd gd-t"><button class="exp" aria-label="Collapse Work Plane1"><svg width="12" height="12"><path d="M1 6h10" stroke="#111" stroke-width="2"/></svg></button></span><svg width="34" height="34"><use href="#i-plane"/></svg>Work Plane1</div>
        <ul><li><div class="trow"><span class="gd gd-v"></span><span class="gd gd-l"></span><svg width="34" height="34"><use href="#i-plane"/></svg>XZ Plane</div></li></ul></li>
        <li><div class="trow"><span class="gd gd-t"></span><svg width="34" height="34" viewBox="0 0 34 34"><rect x="2" y="3" width="30" height="28" fill="#ececec" stroke="#888" stroke-width="2"/><path d="M8 8v17h17" fill="none" stroke="#888" stroke-width="2.500"/><path d="M12 22 31 4" stroke="#bbb" stroke-width="4"/></svg>Sketch5</div></li>
        <li><div class="trow"><span class="gd gd-l"></span><svg width="34" height="34" viewBox="0 0 34 34"><path d="M11 3h11l9 9v11l-9 9H11l-9-9V12Z" fill="#d8485a" stroke="#7a1c28" stroke-width="2"/><path d="m10 10 13 14M23 10 10 24" stroke="#fff" stroke-width="5"/></svg>End of Part</div></li>
      </ul></li>
    </ul>
  </aside>

  <section class="canvas" aria-label="Model view">
    <svg viewBox="320 274 1728 1209" preserveAspectRatio="xMidYMid slice">
      <rect x="548" y="268" width="1340" height="1208" fill="#cdb1c6" stroke="#e01f2c" stroke-width="2"/>
      <path d="M543 1475l5-5 5 5M1883 1475l5-8v9" fill="none" stroke="#f0c060" stroke-width="2"/>
      <g clip-path="url(#hullClip)">
        <rect x="977" y="316" width="497" height="1089" fill="url(#gBody)"/>
        <rect x="977" y="316" width="497" height="480" fill="url(#gFade)"/>
        <path d="M1226 296C1290 366 1362 448 1415 522C1445 576 1478 640 1474 740" fill="none" stroke="#6a343a" stroke-width="90" filter="url(#soft)"/>
        <path d="M1067 501C1030 555 977 650 972 740" fill="none" stroke="#855058" stroke-width="36" stroke-opacity=".5" filter="url(#soft)"/>
      </g>
      <path d="M423 1376h50" stroke="#c42030" stroke-width="2"/><path d="m462 1365 21 11-21 12Z" fill="#a80f14"/>
      <path d="M423 1376v48" stroke="#1c2a7a" stroke-width="2"/><path d="M411 1416h24l-12 19Z" fill="#0a1496"/>
      <circle cx="423" cy="1376" r="12" fill="#12a018"/><path d="m418 1370 5 6 5-6M423 1376v8" fill="none" stroke="#5fe060" stroke-width="2"/>
      <text x="489" y="1384" font-size="22" fill="#d8405c">X</text><text x="416" y="1457" font-size="22" fill="#4a52c4">Z</text>
    </svg>
    <div class="doc-ctl d-flex">
      <button aria-label="Minimize document"><svg width="25" height="28" viewBox="0 0 25 28"><rect x="1" y="16" width="23" height="7" fill="#fff" stroke="#4c5a6c" stroke-width="2"/></svg></button>
      <button aria-label="Restore document"><svg width="25" height="28" viewBox="0 0 25 28"><path d="M7 6V4h16v17h-4" fill="none" stroke="#4c5a6c" stroke-width="2"/><rect x="2" y="8" width="16" height="16" fill="#fff" stroke="#4c5a6c" stroke-width="2"/><rect x="7" y="13" width="6" height="7" fill="#fff" stroke="#4c5a6c" stroke-width="2"/></svg></button>
      <button aria-label="Close document"><svg width="25" height="28" viewBox="0 0 25 28"><path d="m5 7 14 15M19 7 5 22" stroke="#4c5a6c" stroke-width="9"/><path d="m5 7 14 15M19 7 5 22" stroke="#fff" stroke-width="5"/></svg></button>
    </div>
    <button class="cube" aria-label="View cube, top"><span class="cube-in">TOP</span></button>
    <div class="nav-tools d-flex flex-column" role="toolbar" aria-label="Navigation bar">
      <button class="justify-content-end" aria-label="Close navigation bar"><svg width="16" height="16"><circle cx="8" cy="8" r="6" fill="#b5c8d8" stroke="#8093a6" stroke-width="2"/><circle cx="8" cy="8" r="2.500" fill="#dde9f4"/></svg></button>
      <button class="mt-3 pt-1" aria-label="Steering wheel"><svg width="48" height="48" viewBox="0 0 48 48"><path d="M24 2h19q3 0 3 4v18A22 22 0 1 1 24 2Z" fill="#dde7ec" stroke="#7f93a5" stroke-width="2"/><path d="M9 37q14 14 30 0l-8-6q-7 5-14 0Z" fill="#aed4b4"/><circle cx="23" cy="24" r="12" fill="#d5e2ea" stroke="#92a5b4" stroke-width="2"/><path d="m15 15-6-6M31 33l6 6M31 15l6-6M15 33l-6 6" stroke="#92a5b4"/></svg></button>
      <button class="mt-3" aria-label="Wheel options"><i class="car"></i></button>
      <hr>
      <button aria-label="Pan"><svg width="34" height="34" viewBox="0 0 34 34"><path d="M8 19 5 8q1-4 4-1l4 9-1-12q2-4 4 0l2 11 1-12q3-3 4 1v12l4-9q4-1 4 2l-4 14q-2 9-9 10-7 0-11-6L2 20q1-4 6-1Z" fill="#e6edf2" stroke="#6e8193" stroke-width="2"/></svg></button>
      <button class="mt-3" aria-label="Zoom"><svg width="34" height="34" viewBox="0 0 34 34"><circle cx="12" cy="14" r="10" fill="#dbe7f0" stroke="#6e8193" stroke-width="2"/><path d="m19 21 8 9" stroke="#6e8193" stroke-width="5"/><path d="M23 6h10M28 1v10M23 14h10" stroke="#6e8193" stroke-width="2"/></svg></button>
      <button class="mt-2 pt-1" aria-label="Zoom options"><i class="car"></i></button>
      <button class="mt-3" aria-label="Orbit"><svg width="34" height="34" viewBox="0 0 34 34"><ellipse cx="17" cy="17" rx="6" ry="15" fill="none" stroke="#7f93a5" stroke-width="2"/><ellipse cx="17" cy="17" rx="15" ry="6" fill="none" stroke="#7f93a5" stroke-width="2"/><path d="M17 12l8-3M17 21l7-6" stroke="#c98a9a" stroke-width="2"/><path d="M16 13h4v8h-4Z" fill="#9aa5bc"/></svg></button>
      <button class="mt-2 pt-1" aria-label="Orbit options"><i class="car"></i></button>
      <button class="mt-3" aria-label="Look at"><svg width="34" height="34" viewBox="0 0 34 34"><rect x="1" y="11" width="32" height="21" fill="#dde07a" stroke="#6e8193" stroke-width="2"/><rect x="8" y="17" width="18" height="9" fill="#c8c8dc" stroke="#6e8193" stroke-width="2"/><path d="M3 9q10-8 14-4 7-4 10-2l1 4" fill="none" stroke="#6e8193" stroke-width="2"/></svg></button>
      <button class="mt-3" aria-label="Zoom all"><svg width="34" height="34" viewBox="0 0 34 34"><circle cx="14" cy="14" r="12" fill="#dbe7f0" stroke="#6e8193" stroke-width="2"/><path d="M9 6h7l4 4v12H9Z" fill="#fff" stroke="#6e8193" stroke-width="2"/><path d="m23 23 8 8" stroke="#6e8193" stroke-width="5"/></svg></button>
      <button class="justify-content-end mt-auto" aria-label="Customize navigation bar"><svg width="16" height="16"><circle cx="8" cy="8" r="6" fill="#c8d9e6" stroke="#8093a6" stroke-width="2"/><path d="M4 8h8" stroke="#8093a6" stroke-width="2"/></svg></button>
    </div>
  </section>
</main>
<footer class="status-bar d-flex align-items-center"><span>Select plane to create sketch or an existing sketch to edit</span><span class="cell ms-auto">1</span><span class="cell">1</span></footer>
<div class="task-edge"></div>
</div>
</body>
</html>
